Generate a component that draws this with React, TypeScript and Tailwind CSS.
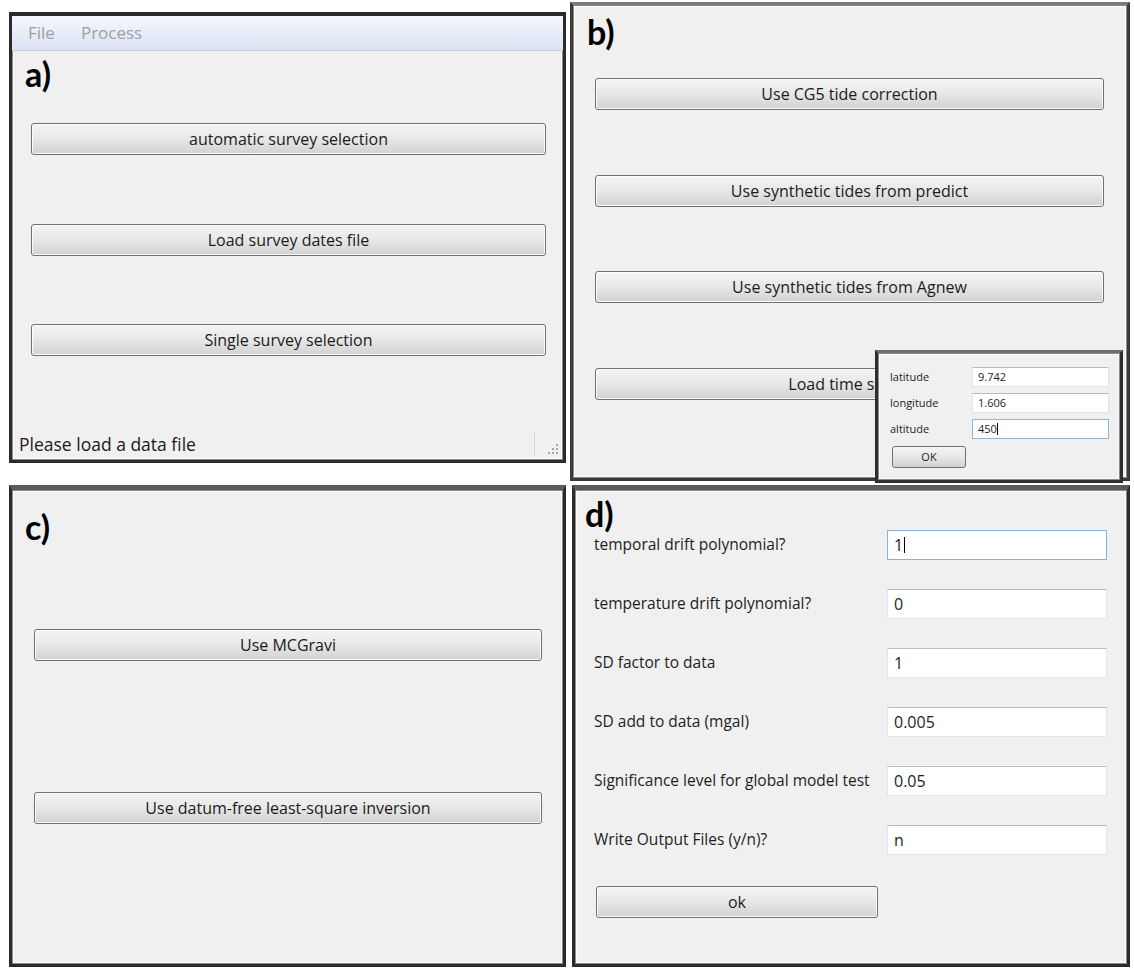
import React from "react";

function Btn({ label, className = "" }: { label: string; className?: string }) {
  return (
    <div
      className={`h-[32px] flex items-center justify-center rounded-[3px] border border-[#707070] bg-linear-to-b from-[#f4f4f4] via-[#e9e9e9] via-45% to-[#d2d2d2] shadow-[inset_0_0_0_1px_#fbfbfb] text-[16px] text-[#1b1b1b] ${className}`}
    >
      {label}
    </div>
  );
}

function Tag({ text, className = "" }: { text: string; className?: string }) {
  return (
    <div className={`h-[32px] leading-[32px] font-['Lato',sans-serif] font-bold text-[34px] text-black ${className}`}>
      {text}
    </div>
  );
}

const frame =
  "relative flex flex-col bg-[#f0f0f0] border-[3px] border-[#2b2b2b] shadow-[inset_0_0_0_1px_#8a8a8a,inset_0_0_0_2px_#fbfbfb]";

function Caret() {
  return <span className="inline-block w-px h-[16px] bg-black align-middle ml-px" />;
}

const rows = [
  { label: "temporal drift polynomial?", value: "1", focus: true },
  { label: "temperature drift polynomial?", value: "0" },
  { label: "SD factor to data", value: "1" },
  { label: "SD add to data (mgal)", value: "0.005" },
  { label: "Significance level for global model test", value: "0.05" },
  { label: "Write Output Files (y/n)?", value: "n" },
];

export default function App() {
  return (
    <div className="w-[1134px] h-[969px] bg-white flex font-['Open_Sans',sans-serif] text-[#1e1e1e] overflow-hidden">
      {/* left column */}
      <div className="flex flex-col ml-[9px] w-[557px]">
        {/* a) */}
        <div className={`${frame} mt-[12px] h-[451px] border-t-[4px] border-[#1c1c1c]`}>
          <div className="h-[35px] flex items-center gap-[26px] pl-[16px] bg-linear-to-b from-[#f5f7fc] to-[#dce2f3] border-b border-[#c9cfe2] text-[17px] text-[#9a9fa8]">
            <span>File</span>
            <span>Process</span>
          </div>
          <Tag text="a)" className="mt-[7px] pl-[13px]" />
          <Btn label="automatic survey selection" className="mt-[33px] ml-[19px] mr-[17px]" />
          <Btn label="Load survey dates file" className="mt-[69px] ml-[19px] mr-[17px]" />
          <Btn label="Single survey selection" className="mt-[68px] ml-[19px] mr-[17px]" />
          <div className="mt-auto h-[32px] flex items-center pl-[7px] pr-[4px] text-[17.5px] text-[#1a1a1a]">
            <span>Please load a data file</span>
            <span className="ml-auto w-px h-[24px] bg-[#d6d6d6] mr-[12px]" />
            <svg width="12" height="12" viewBox="0 0 12 12" className="mt-[10px]">
              {[
                [9, 1],
                [9, 5],
                [5, 5],
                [9, 9],
                [5, 9],
                [1, 9],
              ].map(([x, y]) => (
                <rect key={`${x}-${y}`} x={x} y={y} width="2" height="2" fill="#a8a8a8" />
              ))}
            </svg>
          </div>
        </div>

        {/* c) */}
        <div className={`${frame} mt-[22px] h-[482px] border-t-[5px] border-t-[#5a5a5a]`}>
          <Tag text="c)" className="mt-[21px] pl-[13px]" />
          <Btn label="Use MCGravi" className="mt-[86px] ml-[22px] mr-[21px]" />
          <Btn label="Use datum-free least-square inversion" className="mt-[131px] ml-[22px] mr-[21px]" />
        </div>
      </div>

      {/* right column */}
      <div className="flex flex-col ml-[4px] w-[560px]">
        {/* b) */}
        <div className={`${frame} mt-[2px] h-[479px] border-[#3a3a3a] border-t-[#7a7a7a]`}>
          <Tag text="b)" className="mt-[11px] pl-[14px]" />
          <Btn label="Use CG5 tide correction" className="mt-[30px] ml-[22px] mr-[23px]" />
          <Btn label="Use synthetic tides from predict" className="mt-[65px] ml-[22px] mr-[23px]" />
          <Btn label="Use synthetic tides from Agnew" className="mt-[64px] ml-[22px] mr-[23px]" />
          <Btn label="Load time series" className="mt-[65px] ml-[22px] mr-[23px]" />

          {/* coordinates dialog */}
          <div className="absolute left-[302px] top-[345px] w-[248px] h-[133px] z-10 bg-[#f0f0f0] border-[3px] border-[#2e2e2e] border-t-[#6e6e6e] shadow-[inset_0_0_0_1px_#8a8a8a,inset_0_0_0_2px_#fbfbfb] text-[11px] text-[#1e1e1e] flex flex-col pt-[14px] pl-[12px]">
            {[
              ["latitude", "9.742"],
              ["longitude", "1.606"],
              ["altitude", "450"],
            ].map(([k, v], i) => (
              <div key={k} className={`flex items-center h-[20px] ${i > 0 ? "mt-[6px]" : ""}`}>
                <span className="w-[82px]">{k}</span>
                <div
                  className={`w-[137px] h-[20px] bg-white border flex items-center pl-[5px] ${
                    i === 2 ? "border-[#8fb6d6]" : "border-[#e1e3ea] border-t-[#b8bbc2]"
                  }`}
                >
                  {v}
                  {i === 2 && <span className="inline-block w-px h-[12px] bg-black" />}
                </div>
              </div>
            ))}
            <div className="mt-[7px] ml-[2px] w-[74px] h-[22px] flex items-center justify-center rounded-[3px] border border-[#707070] bg-linear-to-b from-[#f4f4f4] via-[#e9e9e9] via-45% to-[#d2d2d2] text-[11px]">
              OK
            </div>
          </div>
        </div>

        {/* d) */}
        <div className={`${frame} mt-[4px] ml-[2px] w-[558px] h-[482px] border-t-[5px] border-t-[#5a5a5a]`}>
          <Tag text="d)" className="mt-[8px] pl-[10px] h-[30px] leading-[30px]" />
          <div className="flex flex-col gap-[29px] pl-[19px]">
            {rows.map((r) => (
              <div key={r.label} className="flex items-center h-[30px] text-[15.5px]">
                <span className="w-[293px] whitespace-nowrap">{r.label}</span>
                <div
                  className={`w-[220px] h-[30px] bg-white border flex items-center pl-[6px] text-[16px] ${
                    r.focus ? "border-[#88b3d6]" : "border-[#e2e4ea] border-t-[#b9bcc3]"
                  }`}
                >
                  {r.value}
                  {r.focus && <Caret />}
                </div>
              </div>
            ))}
          </div>
          <div className="mt-[31px] ml-[21px] w-[282px] h-[32px] flex items-center justify-center rounded-[3px] border border-[#707070] bg-linear-to-b from-[#f4f4f4] via-[#e9e9e9] via-45% to-[#d2d2d2] shadow-[inset_0_0_0_1px_#fbfbfb] text-[16px]">
            ok
          </div>
        </div>
      </div>
    </div>
  );
}
